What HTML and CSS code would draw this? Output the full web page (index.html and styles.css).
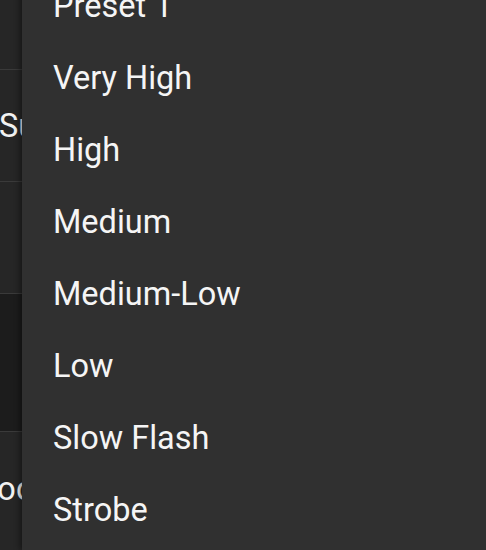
FILE: index.html
```html
<!DOCTYPE html>
<html>
<head>
<meta charset="utf-8">
<link rel="stylesheet" href="styles.css">
</head>
<body>
<div class="page">
  <div class="row row-top"></div>
  <div class="row"><span class="label">Sub</span></div>
  <div class="row"></div>
  <div class="row row-dark"></div>
  <div class="row row-last"><span class="label label-shift">Mode</span></div>
</div>
<ul class="menu">
  <li class="item">Preset 1</li>
  <li class="item">Very High</li>
  <li class="item">High</li>
  <li class="item">Medium</li>
  <li class="item">Medium-Low</li>
  <li class="item">Low</li>
  <li class="item">Slow Flash</li>
  <li class="item">Strobe</li>
</ul>
</body>
</html>
```
FILE: styles.css
```css
html, body {
  margin: 0;
  padding: 0;
  width: 486px;
  height: 550px;
  overflow: hidden;
  background: #262626;
  font-family: Roboto, "Liberation Sans", sans-serif;
}
.page {
  display: flex;
  flex-direction: column;
  height: 550px;
}
.row {
  height: 111px;
  flex: none;
  border-bottom: 1px solid #3a3a3a;
  display: flex;
  align-items: center;
  color: #f2f2f2;
  font-size: 32.5px;
  background: #262626;
  overflow: hidden;
}
.row-top {
  height: 69px;
}
.row-dark {
  height: 137px;
  background: #1c1c1c;
}
.row-last {
  flex: 1;
  height: auto;
  border-bottom: none;
  padding-bottom: 4px;
}
.label {
  margin-left: -1px;
  white-space: nowrap;
}
.label-shift {
  margin-left: -31px;
}
.menu {
  position: absolute;
  left: 22px;
  right: 0;
  top: -30px;
  bottom: 0;
  margin: 0;
  padding: 0;
  list-style: none;
  background: #303030;
  box-shadow: -2px 0 6px rgba(0,0,0,0.45);
}
.item {
  height: 72px;
  display: flex;
  align-items: center;
  padding-left: 31px;
  font-size: 32.5px;
  color: #f5f5f5;
}
```
